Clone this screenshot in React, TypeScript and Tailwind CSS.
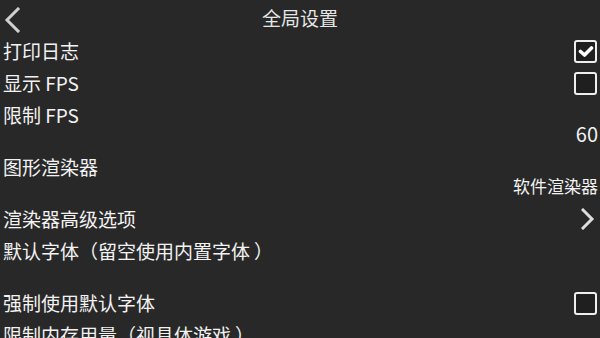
type Item = {
  title: string
  kind?: "check" | "value" | "link"
  checked?: boolean
  value?: string
}

const items: Item[] = [
  { title: "打印日志", kind: "check", checked: true },
  { title: "显示 FPS", kind: "check", checked: false },
  { title: "限制 FPS", kind: "value", value: "60" },
  { title: "图形渲染器", kind: "value", value: "软件渲染器" },
  { title: "渲染器高级选项", kind: "link" },
  { title: "默认字体（留空使用内置字体）", kind: "value", value: "" },
  { title: "强制使用默认字体", kind: "check", checked: false },
  { title: "限制内存用量（视具体游戏）" },
]

// fullwidth brackets get a whole cell each, as in the reference
function Title({ text }: { text: string }) {
  const parts = text.split(/([（）])/)
  return (
    <span className="text-[19px] leading-[26px] whitespace-nowrap">
      {parts.map((p, i) => {
        if (p === "（")
          return (
            <span key={i} className="inline-block w-[19px] text-right pr-[1px]">
              {p}
            </span>
          )
        if (p === "）")
          return (
            <span key={i} className="inline-block w-[19px] pl-[4px]">
              {p}
            </span>
          )
        return <span key={i}>{p}</span>
      })}
    </span>
  )
}

function CheckBox({ checked }: { checked?: boolean }) {
  return (
    <div className="w-[23px] h-[23px] border-2 border-[#eeeeee] rounded-[3px] bg-[#1f1f1f] flex items-center justify-center">
      {checked && (
        <svg width="16" height="13" viewBox="0 0 16 13">
          <path d="M2.5 6.5 L6.5 10 L13.5 3" fill="none" stroke="#ffffff" strokeWidth="3.6" strokeLinecap="round" strokeLinejoin="round" />
        </svg>
      )}
    </div>
  )
}

export default function App() {
  return (
    <div
      lang="zh-CN"
      className="w-[600px] h-[338px] overflow-hidden bg-[#282828] text-[#f2f2f2]"
      style={{ fontFamily: '"Noto Sans CJK SC", "Noto Sans", sans-serif' }}
    >
      {/* Header */}
      <div className="relative h-[35px] flex items-center justify-center">
        <button className="absolute left-[3px] top-[7px] w-[18px] h-[26px] flex items-center justify-center">
          <svg width="18" height="26" viewBox="0 0 18 26">
            <path d="M15 2 L4 13 L15 24" fill="none" stroke="#cfcfcf" strokeWidth="3" strokeLinecap="square" />
          </svg>
        </button>
        <span className="text-[19px] leading-none text-[#e6e6e6]">全局设置</span>
      </div>

      {/* Settings list */}
      <div className="flex flex-col">
        {items.map((item) => (
          <div key={item.title} className={`flex flex-col pt-[3px] ${item.kind === "value" ? "pb-[7px]" : "pb-[3px]"}`}>
            <div className="h-[26px] flex items-center justify-between pl-[3px] pr-[3px]">
              <Title text={item.title} />
              {item.kind === "check" && <CheckBox checked={item.checked} />}
              {item.kind === "link" && (
                <svg width="14" height="22" viewBox="0 0 14 22" className="mr-[2px]">
                  <path d="M2 2 L11 11 L2 20" fill="none" stroke="#dddddd" strokeWidth="3" strokeLinecap="square" />
                </svg>
              )}
            </div>
            {item.kind === "value" && (
              <div className={`-mt-1 h-5 leading-5 text-right pr-[2px] ${/^\d+$/.test(item.value ?? "") ? "text-[20px]" : "text-[17px]"}`}>
                {item.value}
              </div>
            )}
          </div>
        ))}
      </div>
    </div>
  )
}
